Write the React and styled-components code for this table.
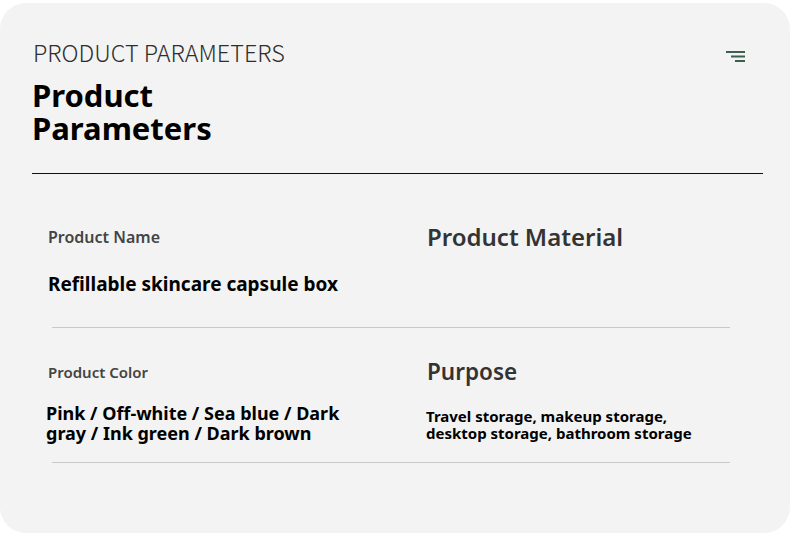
import React from "react";
import styled, { createGlobalStyle } from "styled-components";

const GlobalStyle = createGlobalStyle`
  html, body {
    margin: 0;
    padding: 0;
    background: #ffffff;
  }
  body {
    font-family: "Noto Sans", "Open Sans", sans-serif;
  }
`;

const params = [
  [
    {
      label: "Product Name",
      labelSize: 16,
      value: "Refillable skincare capsule box",
      valueSize: 19,
      gap: 22,
      shift: 0,
    },
    {
      label: "Product Material",
      labelSize: 24,
      heading: true,
      value: "",
      valueSize: 15,
      gap: 20,
      shift: 0,
    },
  ],
  [
    {
      label: "Product Color",
      labelSize: 15,
      value: "Pink / Off-white / Sea blue / Dark gray / Ink green / Dark brown",
      valueSize: 18,
      gap: 16,
      shift: -2,
    },
    {
      label: "Purpose",
      labelSize: 22.5,
      heading: true,
      value: "Travel storage, makeup storage, desktop storage, bathroom storage",
      valueSize: 15,
      gap: 21,
      shift: -1,
    },
  ],
];

const App = () => {
  return (
    <>
      <GlobalStyle />
      <Page>
        <Card>
          <TopBar>
            <Eyebrow>PRODUCT PARAMETERS</Eyebrow>
            <MenuIcon width="19" height="11" viewBox="0 0 19 11">
              <rect x="0" y="0" width="19" height="2" fill="#3e5f4f" />
              <rect x="5" y="4.5" width="14" height="2" fill="#3e5f4f" />
              <rect x="9" y="9" width="10" height="2" fill="#3e5f4f" />
            </MenuIcon>
          </TopBar>
          <Heading>
            Product
            <br />
            Parameters
          </Heading>
          <Rule />
          <Table>
            {params.map((row, i) => (
              <Row key={i}>
                {row.map((cell) => (
                  <Cell key={cell.label}>
                    <Label heading={cell.heading} size={cell.labelSize}>
                      {cell.label}
                    </Label>
                    <Value
                      size={cell.valueSize}
                      gap={cell.gap}
                      shift={cell.shift}
                    >
                      {cell.value}
                    </Value>
                  </Cell>
                ))}
              </Row>
            ))}
          </Table>
        </Card>
      </Page>
    </>
  );
};

const Page = styled.div`
  width: 790px;
  height: 535px;
  padding-top: 3px;
  box-sizing: border-box;
`;

const Card = styled.div`
  width: 790px;
  height: 530px;
  background: #f3f3f3;
  border-radius: 26px;
  box-sizing: border-box;
  padding: 34px 27px 0 32px;
`;

const TopBar = styled.div`
  display: flex;
  align-items: center;
  justify-content: space-between;
  padding-left: 1px;
  padding-right: 18px;
`;

const Eyebrow = styled.div`
  font-family: "Noto Sans CJK SC", "Noto Sans", sans-serif;
  font-size: 23.4px;
  font-weight: 300;
  color: #2e2e2e;
  line-height: 30px;
`;

const MenuIcon = styled.svg`
  display: block;
  margin-top: 9px;
`;

const Heading = styled.h1`
  margin: 12px 0 0;
  font-size: 31px;
  font-weight: 700;
  line-height: 33px;
  color: #000;
`;

const Rule = styled.div`
  height: 1px;
  background: #111;
  margin-top: 28px;
`;

const Table = styled.div`
  padding: 48px 33px 0 20px;
`;

const Row = styled.div`
  display: grid;
  grid-template-columns: 379px 1fr;
  height: 106px;
  box-sizing: border-box;
  border-bottom: 1px solid #c9c9c9;
  margin-bottom: 29px;
`;

const Cell = styled.div`
  display: flex;
  flex-direction: column;
  margin-left: -4px;
`;

const Label = styled.div`
  font-size: ${(p) => p.size}px;
  font-weight: 600;
  color: ${(p) => (p.heading ? "#333" : "#444")};
  line-height: 30px;
`;

const Value = styled.div`
  margin-top: ${(p) => p.gap}px;
  margin-left: ${(p) => p.shift}px;
  font-size: ${(p) => p.size}px;
  font-weight: 700;
  color: #000;
  line-height: ${(p) => (p.size < 16 ? "17px" : "20px")};
  max-width: 320px;
`;

export default App;
